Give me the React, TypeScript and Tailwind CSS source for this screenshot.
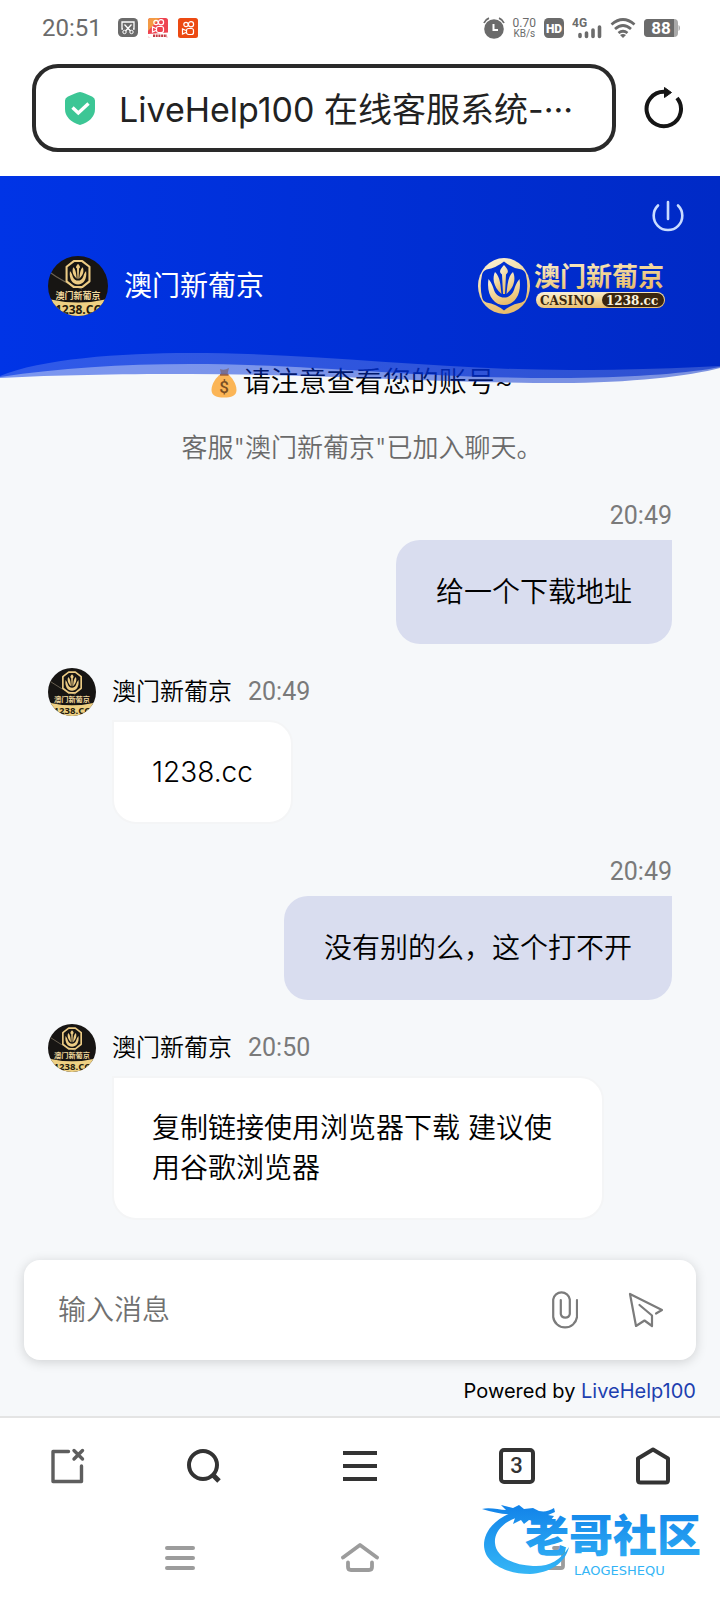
import React from "react";

const HAN = "font-[Inter,'Noto_Sans_CJK_SC',sans-serif]";
const NUM = "font-[Roboto,'Noto_Sans_CJK_SC',sans-serif]";

function Lotus() {
  return (
    <>
      <path d="M26 8 C21.500 13 21 15 24 17.500 L25 37 H27 L28 17.500 C31 15 30.500 13 26 8Z" />
      <path d="M17 15 C14.500 20 14.500 29 23.500 37 C22.500 29 22.500 20 17 15Z" />
      <path d="M35 15 C37.500 20 37.500 29 28.500 37 C29.500 29 29.500 20 35 15Z" />
      <path d="M10.500 22 C8 38 16 48 26 48 C36 48 44 38 41.500 22 C38 26 37 30 36 33 C34 38.500 30 40.500 26 40.500 C22 40.500 18 38.500 16 33 C15 30 14 26 10.500 22Z" />
    </>
  );
}

function Avatar({ className }: { className: string }) {
  const id = React.useId();
  return (
    <svg viewBox="0 0 60 60" className={className} role="img" aria-label="澳门新葡京">
      <clipPath id={id}>
        <circle cx="30" cy="30" r="30" />
      </clipPath>
      <g clipPath={`url(#${id})`}>
        <rect width="60" height="60" fill="#171513" />
        <path d="M0 15 Q16 27 34 33" stroke="#6b6253" strokeWidth="1.200" fill="none" />
        <path d="M0 43 Q30 50 60 43 V60 H0Z" fill="#eed083" />
        <g transform="translate(16.500 3.500) scale(0.520)" fill="#eccb84">
          <path d="M18 3 H34 L48 14 V42 L34 53 H18 L4 42 V14Z" fill="none" stroke="#eccb84" strokeWidth="4" strokeLinejoin="round" />
          <Lotus />
        </g>
        <text x="30" y="43" textAnchor="middle" fontSize="9" fontWeight="700" fill="#f0d79d" fontFamily="Noto Sans CJK SC, sans-serif">
          澳门新葡京
        </text>
        <text x="30" y="58" textAnchor="middle" fontSize="12" fontWeight="700" fill="#241a0c" fontFamily="Open Sans, sans-serif">
          1238.CC
        </text>
      </g>
    </svg>
  );
}

function BrandLogo() {
  return (
    <svg viewBox="0 0 188 58" className="h-[58px] w-[188px]" role="img" aria-label="澳门新葡京 CASINO 1238.cc">
      <defs>
        <linearGradient id="gold" x1="0" y1="0" x2="0.400" y2="1">
          <stop offset="0" stopColor="#fbf3df" />
          <stop offset="0.500" stopColor="#f3dba2" />
          <stop offset="1" stopColor="#e9bd6c" />
        </linearGradient>
      </defs>
      <ellipse cx="26" cy="29" rx="26" ry="28" fill="url(#gold)" />
      <path d="M26 4.500 Q34 11 43.500 12.500 Q47.500 14 48 18 Q50.500 29 48 40 Q47.500 44 43.500 45.500 Q34 47 26 53.500 Q18 47 8.500 45.500 Q4.500 44 4 40 Q1.500 29 4 18 Q4.500 14 8.500 12.500 Q18 11 26 4.500Z" fill="#0030d2" />
      <g fill="url(#gold)">
        <Lotus />
      </g>
      <text x="56" y="29" fontSize="26" fontWeight="700" fill="url(#gold)" fontFamily="Noto Sans CJK SC, sans-serif">
        澳门新葡京
      </text>
      <rect x="58" y="35" width="129" height="16" rx="8" fill="url(#gold)" />
      <path d="M131 36 H179 A7 7 0 0 1 179 50 H131 A7 7 0 0 1 131 36Z" fill="#3a260f" />
      <text x="62" y="47.500" fontSize="12" fontWeight="700" fill="#3a260f" fontFamily="DejaVu Serif, serif">
        CASINO
      </text>
      <text x="128" y="47.500" fontSize="12" fontWeight="700" fill="#fbf3df" fontFamily="DejaVu Serif, serif">
        1238.cc
      </text>
    </svg>
  );
}

function KuaiIcon({ lite }: { lite?: boolean }) {
  return (
    <svg viewBox="0 0 20 20" className="size-5" aria-hidden="true">
      <rect width="20" height="20" rx="2.500" fill={lite ? "#ee4350" : "#ec4a12"} />
      {lite && <path d="M0 2.500 Q0 0 2.500 0 H12 L0 13Z" fill="#f39a45" />}
      <g transform={lite ? "translate(0 -2)" : undefined} fill="none" stroke="#fff" strokeWidth="1.200">
        <circle cx="8" cy="6.500" r="2.200" />
        <circle cx="13" cy="6.200" r="2.600" />
        <rect x="8.500" y="10.500" width="7" height="6" rx="2" />
        <path d="M8 12.500 L4.500 11 V16 L8 14.500" />
      </g>
      {lite && <path d="M0 16 L20 14.500 V17.500 Q20 20 17.500 20 H2.500 Q0 20 0 17.500Z" fill="#fff" />}
      {lite && <path d="M5 17.800 H19" stroke="#c43a44" strokeWidth="2.400" strokeDasharray="2 0.700" />}
    </svg>
  );
}

function StatusBar() {
  return (
    <div className="flex h-14 items-center justify-between pr-10 pl-[42px] text-[#6b6b6b]">
      <div className="flex items-center gap-[10px]">
        <span className={`${NUM} mr-[6px] text-2xl`}>20:51</span>
        <svg viewBox="0 0 20 20" className="size-5" aria-hidden="true">
          <rect width="20" height="19" rx="4.500" fill="#6b6b6b" />
          <path d="M5 11 H4 V4 H16 V11 H15 M6.500 6.500 L12.500 13 M13.500 6.500 L7.500 13" stroke="#fff" strokeWidth="1.300" fill="none" />
          <circle cx="6.500" cy="14" r="1.700" stroke="#fff" fill="none" />
          <circle cx="13.500" cy="14" r="1.700" stroke="#fff" fill="none" />
        </svg>
        <KuaiIcon lite />
        <KuaiIcon />
      </div>
      <div className="flex items-center gap-2">
        <svg viewBox="0 0 22 22" className="size-[22px]" aria-hidden="true">
          <circle cx="11" cy="12" r="9.800" fill="#6b6b6b" />
          <path d="M1 6 Q2.500 2.500 6 1.200 M21 6 Q19.500 2.500 16 1.200" stroke="#6b6b6b" strokeWidth="1.800" fill="none" />
          <path d="M10.500 7 V13 H15" stroke="#fff" strokeWidth="2" fill="none" />
        </svg>
        <span className="flex flex-col items-center font-[Roboto,sans-serif] text-[10px] leading-[10px]">
          <span className="text-xs leading-[11px]">0.70</span>
          <span>KB/s</span>
        </span>
        <svg viewBox="0 0 20 20" className="size-5" role="img" aria-label="HD">
          <rect width="20" height="20" rx="4.500" fill="#6b6b6b" />
          <text x="10" y="14.500" textAnchor="middle" fontSize="12" fontWeight="900" fill="#fff" fontFamily="Roboto, sans-serif">
            HD
          </text>
        </svg>
        <svg viewBox="0 0 30 22" className="h-[22px] w-[30px]" role="img" aria-label="4G">
          <text x="0" y="10" fontSize="12" fontWeight="700" fill="#6b6b6b" fontFamily="Roboto, sans-serif">
            4G
          </text>
          <path d="M8 19.500 V17.500 M14.500 19.500 V16 M21 19.500 V13 M27.500 19.500 V10" stroke="#6b6b6b" strokeWidth="3.600" strokeLinecap="round" />
        </svg>
        <svg viewBox="0 0 26 20" className="h-5 w-[26px]" aria-hidden="true" fill="none" stroke="#6b6b6b" strokeWidth="2.800">
          <path d="M1.500 6.500 Q13 -3.500 24.500 6.500" />
          <path d="M5 11 Q13 4 21 11" />
          <path d="M8.500 15 Q13 11.500 17.500 15" />
          <path d="M10 17 L13 20 L16 17 Q13 15 10 17Z" fill="#6b6b6b" stroke="none" />
        </svg>
        <svg viewBox="0 0 36 18" className="h-[18px] w-9" role="img" aria-label="88">
          <rect width="34" height="18" rx="4" fill="#a9a9a9" />
          <path d="M4 0 H30 V18 H4 Q0 18 0 14 V4 Q0 0 4 0Z" fill="#6b6b6b" />
          <path d="M34.500 6 Q36 6.500 36 9 Q36 11.500 34.500 12Z" fill="#a9a9a9" />
          <text x="17" y="15" textAnchor="middle" fontSize="17" fontWeight="700" fill="#fff" fontFamily="Roboto, sans-serif">
            88
          </text>
        </svg>
      </div>
    </div>
  );
}

function AddressBar() {
  return (
    <div className="flex items-center gap-7 pt-2 pr-9 pb-6 pl-8">
      <button
        type="button"
        className={`${HAN} flex h-[88px] min-w-0 flex-1 items-center gap-6 rounded-[26px] border-4 border-[#2a2a2a] pl-[29px] text-[34px] whitespace-nowrap text-[#222]`}
      >
        <svg viewBox="0 0 30 33" className="h-[33px] w-[30px] shrink-0" aria-hidden="true">
          <path d="M15 0 Q17 0 20 1.500 L27 4.500 Q30 5.800 30 8.500 V17 Q30 28 15 33 Q0 28 0 17 V8.500 Q0 5.800 3 4.500 L10 1.500 Q13 0 15 0Z" fill="#3cc695" />
          <path d="M7.500 15.500 L13.300 21 L23.500 11.500" stroke="#fff" strokeWidth="3.400" fill="none" />
        </svg>
        <span className="pt-[2px]">LiveHelp100 在线客服系统-···</span>
      </button>
      <button type="button" aria-label="刷新" className="shrink-0">
        <svg viewBox="0 0 40 42" className="h-[42px] w-10" fill="none" aria-hidden="true">
          <path d="M33 11 A17.200 17.200 0 1 1 20 4.800 H23" stroke="#151515" strokeWidth="4" />
          <path d="M20.500 0.500 L27.500 5.500 L20.500 10.500Z" fill="#151515" stroke="#151515" strokeLinejoin="round" />
        </svg>
      </button>
    </div>
  );
}

function ChatHeader() {
  return (
    <header className="relative z-10 h-[177px] bg-linear-to-r from-[#0034e6] to-[#002ac6] pt-6 pr-9 pl-12">
      <div className="flex justify-end">
        <button type="button" aria-label="结束对话">
          <svg viewBox="0 0 32 32" className="size-8" fill="none" stroke="#c9dcff" strokeWidth="2.600" strokeLinecap="round" aria-hidden="true">
            <path d="M16 2 V19 M6 5.500 A14.300 14.300 0 1 0 26 5.500" />
          </svg>
        </button>
      </div>
      <div className="mt-6 flex items-center gap-4 pr-[18px]">
        <Avatar className="size-[60px]" />
        <h1 className={`${HAN} flex-1 text-[28px] leading-10 text-white`}>澳门新葡京</h1>
        <BrandLogo />
      </div>
      <svg viewBox="0 0 720 34" preserveAspectRatio="none" className="absolute top-full left-0 h-[34px] w-full" aria-hidden="true">
        <defs>
          <linearGradient id="wave" gradientUnits="userSpaceOnUse" x1="0" y1="0" x2="720" y2="0">
            <stop offset="0" stopColor="#0034e6" />
            <stop offset="1" stopColor="#002ac6" />
          </linearGradient>
        </defs>
        <g fill="url(#wave)">
          <path d="M0 0 V25 C60 22 110 21 190 21 C320 21 440 30 560 30 C630 30 690 23 720 15 V0Z" opacity="0.500" />
          <path d="M0 0 V24 C60 15 120 11 190 11 C320 11 420 26 570 25 C640 24 690 20 720 14 V0Z" opacity="0.620" />
          <path d="M0 0 V23 C40 6 120 0 190 0 C320 0 440 17 570 17 C630 17 680 15 720 13 V0Z" />
        </g>
      </svg>
    </header>
  );
}

function Outgoing({ time, children }: { time: string; children: React.ReactNode }) {
  return (
    <div className="flex flex-col items-end gap-2">
      <time className={`${NUM} text-[25px] leading-8 text-[#7a7a7a]`}>{time}</time>
      <p className={`${HAN} rounded-3xl rounded-tr-none bg-[#d9ddef] px-10 py-8 text-[28px] leading-10 font-[350] text-black`}>{children}</p>
    </div>
  );
}

function Incoming({ time, children }: { time: string; children: React.ReactNode }) {
  return (
    <div className="mt-6 mb-8 flex flex-col items-start gap-1">
      <div className="flex items-center gap-4">
        <Avatar className="size-12" />
        <span className={`${HAN} text-2xl leading-8 font-[350] text-black`}>澳门新葡京</span>
        <time className={`${NUM} text-[25px] leading-8 text-[#7a7a7a]`}>{time}</time>
      </div>
      <p className={`${HAN} ml-16 max-w-[492px] rounded-3xl rounded-tl-none border-2 border-[#f4f5f6] bg-white px-[38px] py-[30px] text-[28px] leading-10 font-[350] text-black`}>
        {children}
      </p>
    </div>
  );
}

function MoneyBag() {
  return (
    <svg viewBox="0 0 26 31" className="h-[31px] w-[26px]" role="img" aria-label="💰">
      <path d="M9 2 Q13 4 18 1 L16.500 7 H10Z" fill="#f0b04e" />
      <path d="M10 7 H16.500 C21 10 25.500 17 25.500 23 C25.500 29 20 30.500 13 30.500 C6 30.500 0.500 29 0.500 23 C0.500 17 5 10 10 7Z" fill="#fbb556" />
      <path d="M9 7.800 H17.500" stroke="#a86a3c" strokeWidth="2" />
      <text x="13" y="26" textAnchor="middle" fontSize="17" fontWeight="500" fill="#7a4f24" fontFamily="Roboto, sans-serif">
        $
      </text>
    </svg>
  );
}

function Composer() {
  return (
    <form className="mx-6 flex h-[100px] items-center rounded-2xl bg-white pr-8 pl-[34px] shadow-[0_2px_12px_rgba(0,0,0,0.16)]" onSubmit={(e) => e.preventDefault()}>
      <input
        type="text"
        aria-label="输入消息"
        placeholder="输入消息"
        className={`${HAN} min-w-0 flex-1 bg-transparent text-[28px] font-[350] text-black outline-none placeholder:text-[#707070]`}
      />
      <button type="button" aria-label="附件" className="mr-[50px]">
        <svg viewBox="0 0 26 40" className="h-10 w-[26px]" fill="none" stroke="#7b7b7b" strokeWidth="2.200" strokeLinecap="round" aria-hidden="true">
          <path d="M25 10 V27 A12 12 0 0 1 1.200 27 V9.500 A8.400 8.400 0 0 1 17.800 9.500 V24 A4.600 4.600 0 0 1 8.800 24 V10" />
        </svg>
      </button>
      <button type="submit" aria-label="发送">
        <svg viewBox="0 0 36 36" className="size-9" fill="none" stroke="#7b7b7b" strokeWidth="2.200" strokeLinecap="round" strokeLinejoin="round" aria-hidden="true">
          <path d="M28 21.500 L34 18 L2 2 L8 34 L16.500 28.500 L24 34 V23.500 L11.500 13" />
        </svg>
      </button>
    </form>
  );
}

function BrowserToolbar() {
  return (
    <nav aria-label="浏览器" className="flex h-[100px] items-center justify-between border-t-2 border-[#e4e4e4] bg-white px-[50px] pb-[2px]">
      <button type="button" aria-label="关闭标签页">
        <svg viewBox="0 0 36 36" className="size-9" fill="none" stroke="#5e5e5e" strokeWidth="3.400" strokeLinecap="round" strokeLinejoin="round" aria-hidden="true">
          <path d="M18.500 3.500 H3 V33.500 H31.500 V18" />
          <path d="M24 2.500 L32.500 11 M32.500 2.500 L24 11" />
        </svg>
      </button>
      <button type="button" aria-label="搜索">
        <svg viewBox="0 0 36 36" className="size-9" fill="none" stroke="#333" strokeWidth="4" aria-hidden="true">
          <circle cx="17" cy="17" r="14" />
          <path d="M26 26 L33 33" strokeWidth="5" />
        </svg>
      </button>
      <button type="button" aria-label="菜单" className="flex w-[78px] justify-center">
        <svg viewBox="0 0 36 36" className="size-9" stroke="#333" strokeWidth="4" aria-hidden="true">
          <path d="M1 5 H35 M1 18 H35 M1 31 H35" />
        </svg>
      </button>
      <button type="button" aria-label="3 个标签页" className="flex size-9 items-center justify-center rounded-[5px] border-4 border-[#333] font-[Roboto,sans-serif] text-[22px] leading-none font-medium text-[#333]">
        3
      </button>
      <button type="button" aria-label="主页">
        <svg viewBox="0 0 36 38" className="h-[38px] w-9" fill="none" stroke="#333" strokeWidth="4" strokeLinejoin="round" aria-hidden="true">
          <path d="M19 2.500 L34 11.500 V33 Q34 35.500 31.500 35.500 H6.500 Q4 35.500 4 33 V11.500Z" />
        </svg>
      </button>
    </nav>
  );
}

function SystemNav() {
  return (
    <nav aria-label="系统" className="relative grid h-[84px] grid-cols-[270px_180px_1fr] bg-white">
      <button type="button" aria-label="最近任务" className="flex items-center justify-end pr-[75px]">
        <svg viewBox="0 0 30 26" className="h-[26px] w-[30px]" stroke="#9c9c9c" strokeWidth="4" strokeLinecap="round" aria-hidden="true">
          <path d="M2 3 H28 M2 13 H28 M2 23 H28" />
        </svg>
      </button>
      <button type="button" aria-label="桌面" className="flex items-center justify-center">
        <svg viewBox="0 0 38 32" className="h-8 w-[38px]" fill="none" stroke="#9c9c9c" strokeWidth="3.800" strokeLinecap="round" strokeLinejoin="round" aria-hidden="true">
          <path d="M2 15.500 L19 3 L36 15.500 M7 20.500 V25 Q7 28 10 28 H28 Q31 28 31 25 V20.500" />
        </svg>
      </button>
      <button type="button" aria-label="返回" className="flex items-center pl-[75px]">
        <svg viewBox="0 0 40 26" className="h-[26px] w-10" fill="none" stroke="#9c9c9c" strokeWidth="3.800" strokeLinecap="round" strokeLinejoin="round" aria-hidden="true">
          <path d="M29 3 H36 Q38 3 38 5 V21 Q38 23 36 23 H20" />
        </svg>
      </button>
      <Watermark />
    </nav>
  );
}

function Watermark() {
  return (
    <svg viewBox="0 0 230 84" className="pointer-events-none absolute -top-4 right-2 h-[84px] w-[230px]" role="img" aria-label="老哥社区 LAOGESHEQU">
      <defs>
        <linearGradient id="azure" gradientUnits="userSpaceOnUse" x1="0" y1="0" x2="0" y2="74">
          <stop offset="0" stopColor="#0f7fe8" />
          <stop offset="1" stopColor="#35b6f6" />
        </linearGradient>
      </defs>
      <g fill="url(#azure)">
        <path d="M34 11 C14 17 2 31 2 45 C2 63 24 74 48 74 C67 73 83 64 87 47 C78 61 66 67 51 66 C31 65 14 57 13 43 C12 32 21 21 40 16Z" />
        <path d="M0 9 C8 7 17 10 24 10 L19 5 L31 8 L37 5 L42 9 L51 8 L57 11 C63 12 67 11 72 8 L73 12 L66 15 L72 16 L69 20 L61 18 L67 23 L56 22 L47 20 L42 24 L39 20 L31 24 L33 18 L27 19 L30 14 C21 15 11 12 0 9Z" />
        <text x="43" y="52" fontSize="44" fontWeight="900" fontFamily="Noto Sans CJK SC, sans-serif">
          老哥社区
        </text>
        <text x="92" y="75" fontSize="13" fontFamily="DejaVu Sans, sans-serif">
          LAOGESHEQU
        </text>
      </g>
    </svg>
  );
}

export default function App() {
  return (
    <div className="flex min-h-screen flex-col bg-white">
      <StatusBar />
      <AddressBar />
      <div className="flex flex-1 flex-col bg-[#f6f8fa]">
        <ChatHeader />
        <main className="flex-1 px-12 pt-[13px]">
          <p className={`${HAN} flex items-center justify-center gap-[6px] pl-1 text-[28px] leading-8 font-[350] text-black`}>
            <MoneyBag />
            请注意查看您的账号~
          </p>
          <p className={`${HAN} mt-[34px] mb-9 pl-1 text-center text-[26px] leading-8 font-[350] text-[#6a6a6a]`}>客服"澳门新葡京"已加入聊天。</p>
          <Outgoing time="20:49">给一个下载地址</Outgoing>
          <Incoming time="20:49">1238.cc</Incoming>
          <Outgoing time="20:49">没有别的么，这个打不开</Outgoing>
          <Incoming time="20:50">复制链接使用浏览器下载 建议使用谷歌浏览器</Incoming>
        </main>
        <footer className="pt-2">
          <Composer />
          <p className={`${HAN} px-6 pt-[17px] pb-[11px] text-right text-xl leading-7 text-black`}>
            Powered by{" "}
            <a href="#livehelp100" className="text-[#1d3fb0]">
              LiveHelp100
            </a>
          </p>
        </footer>
      </div>
      <BrowserToolbar />
      <SystemNav />
    </div>
  );
}
